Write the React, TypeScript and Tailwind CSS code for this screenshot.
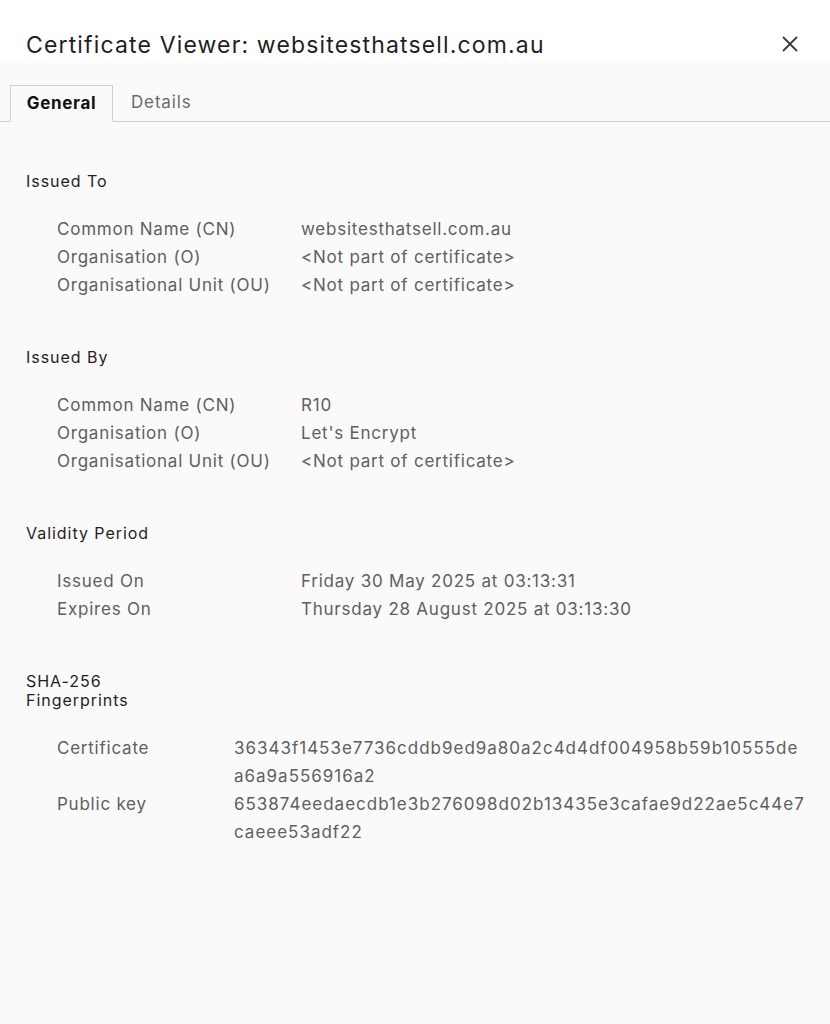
import React from 'react';

// Chrome-style certificate viewer, "General" tab.

type Row = { label: string; value: React.ReactNode };

const font = { fontFamily: 'Inter, "Noto Sans", sans-serif' };

function Section({
  title,
  rows,
  labelWidth,
  titleClass = '',
  valueClass = '',
}: {
  title: React.ReactNode;
  rows: Row[];
  labelWidth: string;
  titleClass?: string;
  valueClass?: string;
}) {
  return (
    <section className="mt-[49px] first:mt-[50px]">
      <h2 className={`text-[16px] leading-[19px] tracking-[0.06em] text-[#1f1f1f] ${titleClass}`}>{title}</h2>
      <div className="mt-[24px] pl-[31px]">
        {rows.map((r, i) => (
          <div key={i} className="flex text-[17px] leading-[28px] tracking-[0.045em] text-[#5f5f5f]">
            <div className={`${labelWidth} shrink-0`}>{r.label}</div>
            <div className={valueClass}>{r.value}</div>
          </div>
        ))}
      </div>
    </section>
  );
}

export default function App() {
  return (
    <div className="min-h-[1024px] w-full bg-[#fafafa]" style={font}>
      <header className="flex h-[63px] items-start justify-between bg-white pl-[26px] pr-[31px] pt-[30px]">
        <h1 className="text-[23px] leading-[30px] tracking-[0.05em] text-[#1f1f1f]">
          Certificate Viewer: websitesthatsell.com.au
        </h1>
        <button className="mt-[5px] text-[#3c3c3c]" aria-label="Close">
          <svg width="18" height="18" viewBox="0 0 18 18" fill="none" stroke="currentColor" strokeWidth="1.8">
            <path d="M2 2 L16 16 M16 2 L2 16" />
          </svg>
        </button>
      </header>

      <nav className="mt-[22px] flex h-[37px] items-end border-b border-[#cfcfcf] pl-[10px]">
        <div className="-mb-px flex h-[37px] w-[103px] items-center justify-center border border-b-[#fafafa] border-[#cfcfcf] bg-[#fafafa] text-[17px] font-bold tracking-[0.04em] text-[#111]">
          General
        </div>
        <div className="flex h-[36px] items-center pl-[18px] text-[17px] tracking-[0.05em] text-[#6b6b6b]">Details</div>
      </nav>

      <main className="px-[26px]">
        <Section
          title="Issued To"
          labelWidth="w-[244px]"
          rows={[
            { label: 'Common Name (CN)', value: 'websitesthatsell.com.au' },
            { label: 'Organisation (O)', value: '<Not part of certificate>' },
            { label: 'Organisational Unit (OU)', value: '<Not part of certificate>' },
          ]}
        />
        <Section
          title="Issued By"
          labelWidth="w-[244px]"
          rows={[
            { label: 'Common Name (CN)', value: 'R10' },
            { label: 'Organisation (O)', value: "Let's Encrypt" },
            { label: 'Organisational Unit (OU)', value: '<Not part of certificate>' },
          ]}
        />
        <Section
          title="Validity Period"
          labelWidth="w-[244px]"
          rows={[
            { label: 'Issued On', value: 'Friday 30 May 2025 at 03:13:31' },
            { label: 'Expires On', value: 'Thursday 28 August 2025 at 03:13:30' },
          ]}
        />
        <Section
          title="SHA-256 Fingerprints"
          titleClass="w-[120px]"
          labelWidth="w-[177px]"
          valueClass="tracking-[0.058em]"
          rows={[
            {
              label: 'Certificate',
              value: (
                <>
                  <span className="block">36343f1453e7736cddb9ed9a80a2c4d4df004958b59b10555de</span>
                  <span className="block">a6a9a556916a2</span>
                </>
              ),
            },
            {
              label: 'Public key',
              value: (
                <>
                  <span className="block">653874eedaecdb1e3b276098d02b13435e3cafae9d22ae5c44e7</span>
                  <span className="block">caeee53adf22</span>
                </>
              ),
            },
          ]}
        />
      </main>
    </div>
  );
}
